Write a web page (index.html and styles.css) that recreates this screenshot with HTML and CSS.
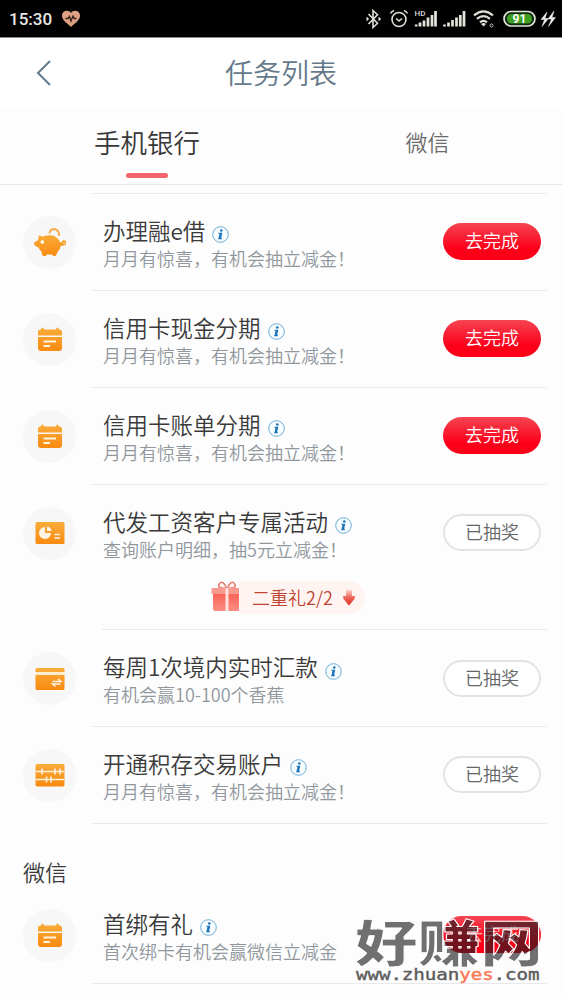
FILE: index.html
```html
<!DOCTYPE html>
<html lang="zh-CN">
<head>
<meta charset="utf-8">
<title>任务列表</title>
<link rel="stylesheet" href="styles.css">
</head>
<body>
<svg class="defs" width="0" height="0">
  <defs>
    <linearGradient id="orange" x1="0" y1="0" x2="0" y2="1"><stop offset="0" stop-color="#f9ac3a"/><stop offset="1" stop-color="#f98a10"/></linearGradient>
    <linearGradient id="gift" x1="0" y1="0" x2="0" y2="1"><stop offset="0" stop-color="#fa5e52"/><stop offset="1" stop-color="#fb8d84"/></linearGradient>
    <linearGradient id="arrow" x1="0" y1="0" x2="0" y2="1"><stop offset="0" stop-color="#fbd5cf"/><stop offset=".45" stop-color="#ef6a5c"/><stop offset="1" stop-color="#dd2f22"/></linearGradient>
    <symbol id="info" viewBox="0 0 17 17"><circle cx="8.5" cy="8.5" r="7.8" fill="#f8fdff" stroke="#5ba3cf" stroke-width=".9"/><circle cx="9.3" cy="4.5" r="1.3" fill="#1873b8"/><path d="M6.4 7.2h3.2L8.4 12.3h1.4M6.3 12.6h3.4" fill="none" stroke="#1873b8" stroke-width="1.1"/><path d="M8.6 7.2 7.5 12.4" stroke="#1873b8" stroke-width="1.9"/></symbol>
    <symbol id="calendar" viewBox="0 0 32 32"><path fill="url(#orange)" d="M4 12.5V9.5Q4 6.800 6.500 6.600Q7.200 6.500 7.300 5.600Q8.500 3.600 9.700 5.600Q9.800 6.600 10.800 6.600H21.200Q22.200 6.600 22.300 5.600Q23.500 3.600 24.700 5.600Q24.800 6.500 25.500 6.600Q28 6.800 28 9.500V12.500ZM4 14H28V25Q28 28 25 28H7Q4 28 4 25Z"/><path d="M9.500 18.500H22M9.500 23H16" stroke="#fff2df" stroke-width="1.900"/></symbol>
    <symbol id="pig" viewBox="0 0 32 32"><path fill="url(#orange)" d="M4.500 8.500Q6 8.500 9 9.500Q13 7.500 19 8.500Q24.500 10.500 26 15Q27.500 16 28 14.500Q29 12 31 13.500Q33 15 32 17.500Q30 19 27 18.500Q26 23 23.500 25L22.500 27.500Q22 29 20.500 29H19.500L18 27.500H13L11.500 29H9.500Q8 28.500 8 27L7.500 24.500Q5.500 23 4.500 20.500L1.500 19Q0 18 0 15.500Q1 14.500 3 14Q5 12.500 4.500 8.500Z"/><path d="M15.500 6.500Q16 2 20.500 2Q25.500 3 25 9" fill="none" stroke="#f9ad4c" stroke-width="2"/><circle cx="8.300" cy="15" r="1.800" fill="#fff"/><circle cx="30" cy="16.300" r=".7" fill="#fff"/></symbol>
    <symbol id="chart" viewBox="0 0 32 32"><rect x="1.500" y="5" width="29" height="22" rx="1.500" fill="url(#orange)"/><path d="M11 10A6 6 0 1 0 17 16H11Z" fill="#fff3e4"/><path d="M13 9.500A5 5 0 0 1 17.500 14H13Z" fill="#fff3e4"/><path d="M20.500 17.500H26M20.500 21H26" stroke="#fff3e4" stroke-width="1.500"/></symbol>
    <symbol id="card" viewBox="0 0 32 32"><path fill="url(#orange)" d="M1.500 9V6.500Q1.500 5 3 5H29Q30.500 5 30.500 6.500V9ZM1.500 12H30.500V25.500Q30.500 27 29 27H3Q1.500 27 1.500 25.500Z"/><path d="M1.500 10.500H30.500" stroke="#ffedcf" stroke-width="3"/><path d="M18.500 18.500H27L24 16M26.500 21H18.500L21.500 23.500" fill="none" stroke="#fff3e4" stroke-width="1.500"/></symbol>
    <symbol id="abacus" viewBox="0 0 32 32"><rect x="1.500" y="5" width="29" height="22.500" rx="1.800" fill="url(#orange)"/><path d="M1.500 12.500H30.500M1.500 20.500H30.500M8 9.500v6M21 9.500v6M26 9.500v6M12.500 17.500v6M17 17.500v6" stroke="#fff0dc" stroke-width="1.700"/></symbol>
  </defs>
</svg>

<header class="status">
  <span class="clock">15:30</span>
  <svg class="heart" viewBox="0 0 20 18"><path d="M10 17C7 14 1 10 1 6C1 0 8-.5 10 3C12-.5 19 0 19 6C19 10 13 14 10 17Z" fill="#dfa184"/><path d="M4.500 8.500H7L8.500 6.500L10 11L12 6L13.200 8.500H15.500" fill="none" stroke="#352018" stroke-width="1.300"/></svg>
  <svg class="signals" viewBox="0 0 195 28">
    <g fill="none" stroke="#deded6" stroke-width="1.600">
      <path d="M6.500 9 15.500 18.300 11 22.500V5.500L15.500 9.700 6.500 19"/>
      <path d="M4.500 12.500l1.500 1.500-1.500 1.500M16.500 12.500l1.500 1.500-1.500 1.500"/>
      <circle cx="37" cy="14.500" r="7"/><path d="M34 13.500l3 2.500 3-2.500M28.500 8.500Q29.500 6.500 32 5.500M42 5.500Q44.500 6.500 45.500 8.500"/>
      <path d="M112 10.300Q121.500 2.300 131 10.300M115 13.800Q121.500 8.300 128 13.800M118 17.300Q121.500 14.300 125 17.300" stroke-width="2.200"/>
      <circle cx="129.500" cy="20.500" r="1.500" stroke-width=".8"/>
    </g>
    <path fill="#deded6" d="M119 19Q121.500 17 124 19L121.500 21.500Z"/>
    <path stroke="#e4e4dc" stroke-width="2.700" d="M54.200 21.500v-2M58 21.500v-4M62 21.500v-6M66 21.500v-9M70 21.500v-11.500M73.500 21.500V6M82.500 21.500v-2M86.500 21.500v-4M90.500 21.500v-6.500M94.500 21.500v-9M98.300 21.500v-11.500M102 21.500V6"/>
    <text x="52.500" y="11" class="hd">HD</text>
    <rect x="142" y="6.500" width="31" height="14.500" rx="7.250" fill="#132711" stroke="#dde5d4" stroke-width="1.700"/>
    <rect x="145" y="9" width="25" height="9.500" rx="4.500" fill="#3d9e22"/>
    <text x="157.500" y="18" text-anchor="middle" class="battery">91</text>
    <path fill="#eee" stroke="#eee" stroke-width=".5" d="M185 7l-6 7.500h3.500L180 21.500l6.500-8H183ZM192 6l-6 8h3.500L186.500 21.500l7-9H190Z"/>
  </svg>
</header>

<nav class="titlebar">
  <svg class="back" viewBox="0 0 16 28"><path d="M14 2 2 14 14 26" fill="none" stroke="#617b8e" stroke-width="2"/></svg>
  <h1>任务列表</h1>
</nav>
<div class="tabs"><div class="tab active">手机银行</div><div class="tab">微信</div></div>

<main class="list">
  <section class="task">
    <div class="avatar"><svg><use href="#pig"/></svg></div>
    <div class="body"><div class="copy"><h2>办理融e借<svg><use href="#info"/></svg></h2><p>月月有惊喜，有机会抽立减金！</p></div><button class="go">去完成</button></div>
  </section>
  <section class="task">
    <div class="avatar"><svg><use href="#calendar"/></svg></div>
    <div class="body"><div class="copy"><h2>信用卡现金分期<svg><use href="#info"/></svg></h2><p>月月有惊喜，有机会抽立减金！</p></div><button class="go">去完成</button></div>
  </section>
  <section class="task">
    <div class="avatar"><svg><use href="#calendar"/></svg></div>
    <div class="body"><div class="copy"><h2>信用卡账单分期<svg><use href="#info"/></svg></h2><p>月月有惊喜，有机会抽立减金！</p></div><button class="go">去完成</button></div>
  </section>
  <section class="task plain">
    <div class="avatar"><svg><use href="#chart"/></svg></div>
    <div class="body"><div class="copy"><h2>代发工资客户专属活动<svg><use href="#info"/></svg></h2><p>查询账户明细，抽5元立减金！</p></div><button class="done">已抽奖</button></div>
  </section>
  <div class="bonus">
    <svg class="gift" viewBox="0 0 32 32"><path d="M15.500 8Q5 9 8.500 3.500Q12-.5 15.500 8ZM16.500 8Q27 9 23.500 3.500Q20-.5 16.500 8Z" fill="#fff1ee" stroke="#e8796e" stroke-width="1.400"/><rect x="2" y="12" width="28" height="19" rx="2" fill="url(#gift)"/><rect x=".5" y="8" width="31" height="6" rx="1" fill="#f99a91"/><path d="M16 8v23" stroke="#ffe4de" stroke-width="3"/></svg>
    <span class="bonus-pill">二重礼2/2<svg viewBox="0 0 12 16"><path d="M3 0H9V6H12L11.500 9 6 15.500.5 9 0 6H3Z" fill="url(#arrow)"/></svg></span>
  </div>
  <section class="task">
    <div class="avatar"><svg><use href="#card"/></svg></div>
    <div class="body"><div class="copy"><h2>每周1次境内实时汇款<svg><use href="#info"/></svg></h2><p>有机会赢10-100个香蕉</p></div><button class="done">已抽奖</button></div>
  </section>
  <section class="task">
    <div class="avatar"><svg><use href="#abacus"/></svg></div>
    <div class="body"><div class="copy"><h2>开通积存交易账户<svg><use href="#info"/></svg></h2><p>月月有惊喜，有机会抽立减金！</p></div><button class="done">已抽奖</button></div>
  </section>
  <h3>微信</h3>
  <section class="task">
    <div class="avatar"><svg><use href="#calendar"/></svg></div>
    <div class="body"><div class="copy"><h2>首绑有礼<svg><use href="#info"/></svg></h2><p>首次绑卡有机会赢微信立减金</p></div><button class="go faded">去完成</button></div>
  </section>
</main>

<svg class="watermark" viewBox="0 0 200 80">
  <text class="brand" transform="translate(3 49) scale(1 .83)" textLength="188" lengthAdjust="spacingAndGlyphs">好赚网</text>
  <text class="url" transform="translate(4 67) scale(1.200 1)" textLength="153" lengthAdjust="spacing">www.zhuan<tspan class="hot">yes</tspan>.com</text>
</svg>
</body>
</html>
```
FILE: styles.css
```css
* { box-sizing: border-box; }
body { margin: 0; width: 562px; height: 999px; overflow: hidden; position: relative; background: #fdfdfd; font-family: "Noto Sans CJK SC", sans-serif; font-weight: 350; color: #3a3a3a; }
h1, h2, h3, p { margin: 0; font-weight: 350; }
.defs { position: absolute; }
.status { height: 38px; background: #000; border-bottom: 1px solid #888; display: flex; align-items: center; padding: 0 5px 0 9px; color: #e8e8e4; }
.clock { font: 500 17px/37px Roboto, sans-serif; width: 52px; padding-top: 1px; }
.heart { width: 20px; height: 18px; }
.signals { width: 195px; height: 28px; margin-left: auto; }
.hd { font: 500 8px Roboto, sans-serif; fill: #ddd; }
.battery { font: 700 12px Roboto, sans-serif; fill: #fff; }
.titlebar { height: 70px; display: grid; grid-template-columns: 36px 1fr 36px; align-items: center; background: #fff; }
.back { width: 16px; height: 28px; margin-left: 36px; }
.titlebar h1 { text-align: center; font-size: 28px; line-height: 40px; color: #64798a; padding-bottom: 2px; }
.tabs { height: 77px; display: grid; grid-template-columns: 294px 1fr; border-bottom: 1px solid #e8e8e8; }
.tab { text-align: center; font-size: 22px; line-height: 67px; color: #6c6c6c; padding-right: 1px; }
.tab.active { font-size: 26.500px; line-height: 68px; color: #383838; padding: 0; }
.tab.active::after { content: ""; display: block; width: 42px; height: 5px; margin: -3px auto 0; border-radius: 3px; background: #f2666c; }
.list { padding: 8px 15px 0 23px; }
.list::before { content: ""; display: block; height: 1px; margin-left: 69px; background: #e8e9eb; }
.task { height: 96.900px; display: flex; }
.avatar { width: 53px; height: 53px; margin: 22px 16px 0 0; border-radius: 50%; background: #f7f7f7; display: flex; align-items: center; justify-content: center; flex: none; }
.avatar svg { width: 32px; height: 32px; overflow: visible; }
.body { flex: 1; display: flex; align-items: center; justify-content: space-between; padding: 0 6px 0 11px; border-bottom: 1.500px solid #e8e9eb; }
.copy { padding-top: 1px; }
.copy h2 { display: flex; align-items: center; font-size: 22.500px; line-height: 31px; white-space: nowrap; }
.copy h2 svg { width: 17px; height: 17px; margin: 9px 0 0 7px; }
.copy p { font-size: 18px; line-height: 24px; color: #90979d; white-space: nowrap; }
button { width: 98px; height: 37px; padding: 0 0 3px; border-radius: 19px; font: 350 18px/24px "Noto Sans CJK SC", sans-serif; flex: none; }
.go { border: 0; background: linear-gradient(#f64452, #fc0019 70%, #fd0017); color: #fff; }
.faded { color: #ffb8be; }
.done { border: 2px solid #e2e3e4; background: #fff; color: #666; }
.plain .body { border-color: transparent; }
.bonus { height: 48.500px; margin-left: 79px; border-bottom: 1.500px solid #e8e9eb; display: flex; align-items: flex-start; padding-left: 109px; }
.gift { width: 32px; height: 32px; margin-top: -2px; }
.bonus-pill { display: flex; align-items: center; height: 33px; margin: -1px 0 0 -4px; padding: 0 10px 1px 13px; background: #fff4f2; border-radius: 0 17px 17px 0; font-size: 18px; color: #bd4430; white-space: nowrap; }
.bonus-pill svg { width: 12px; height: 16px; margin: 2px 0 0 10px; }
.list h3 { height: 63px; padding-top: 31px; font-size: 22px; line-height: 32px; }
.watermark { position: absolute; left: 352px; top: 913px; width: 200px; height: 80px; }
.brand { font: 900 60px "Noto Sans CJK SC", sans-serif; fill: #201c20; fill-opacity: .63; stroke: #fff; stroke-width: 1.100; stroke-linejoin: round; }
.url { font: 400 16px "DejaVu Sans Mono", monospace; fill: #5c5c5c; stroke: #5c5c5c; stroke-width: .4; }
.hot { fill: #fb7855; stroke: #fb7855; }
```
